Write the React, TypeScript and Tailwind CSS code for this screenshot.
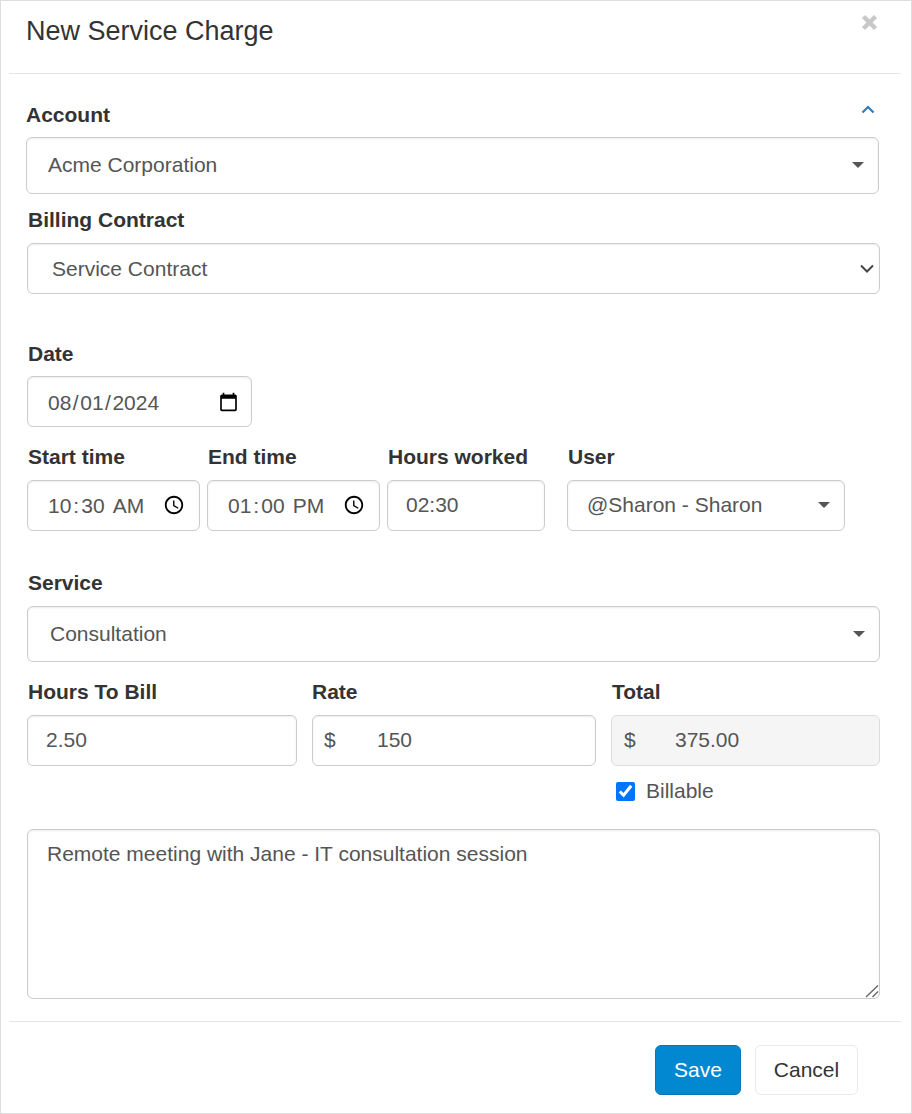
const inputCls =
  "block h-full w-full rounded-[6px] border border-[#ccc] bg-white text-[21px] text-[#555] shadow-[inset_0_1px_2px_rgba(0,0,0,0.075)] outline-none";

function Label({ children, className = "" }: { children: React.ReactNode; className?: string }) {
  return <label className={`block text-[21px] leading-[30px] font-bold text-[#333] ${className}`}>{children}</label>;
}

function Caret() {
  return (
    <svg width="12" height="6" viewBox="0 0 12 6" className="shrink-0">
      <path d="M0 0h12L6 6z" fill="#555" />
    </svg>
  );
}

function FakeSelect({ value, className, pad }: { value: string; className: string; pad: string }) {
  return (
    <div
      className={`flex items-center justify-between rounded-[6px] border border-[#ccc] bg-white text-[21px] text-[#555] shadow-[inset_0_1px_2px_rgba(0,0,0,0.075)] ${pad} ${className}`}
    >
      <span>{value}</span>
      <Caret />
    </div>
  );
}

function MoneyInput({ value, disabled }: { value: string; disabled?: boolean }) {
  return (
    <div
      className={`flex h-[51px] items-center rounded-[6px] border pb-[2px] text-[21px] text-[#555] ${
        disabled
          ? "border-[#ddd] bg-[#f5f5f5]"
          : "border-[#ccc] bg-white shadow-[inset_0_1px_2px_rgba(0,0,0,0.075)]"
      }`}
    >
      <span className={`shrink-0 ${disabled ? "ml-3 w-[51px]" : "ml-[11px] w-[53px]"}`}>$</span>
      <span>{value}</span>
    </div>
  );
}

const dateParts = "[&::-webkit-datetime-edit-text]:px-[0.5px]";
const timeParts = "[&::-webkit-datetime-edit-text]:px-[1px]";

export default function App() {
  return (
    <div className="h-[1114px] w-[912px] border border-[#ddd] bg-white font-['Liberation_Sans',Arial,sans-serif] text-[#333]">
      <header className="relative mr-[10px] ml-2 h-[73px] border-b border-[#e5e5e5] pl-[17px] pt-[11px]">
        <h1 className="text-[27px] leading-[38px] font-normal text-[#333]">New Service Charge</h1>
        <button className="absolute top-[13px] right-[23px]" aria-label="Close">
          <svg width="17" height="17" viewBox="0 0 17 17">
            <path d="M2.5 2.5l12 12M14.5 2.5l-12 12" stroke="#c8c8c8" strokeWidth="4.4" />
          </svg>
        </button>
      </header>

      <main className="pl-[25px]">
        <div className="flex h-[63px] items-end justify-between pr-[36px]">
          <Label className="pb-[7px]">Account</Label>
          <svg width="14" height="9" viewBox="0 0 14 9" className="mb-[23px]">
            <path d="M1.5 7.5L7 2l5.5 5.5" fill="none" stroke="#337ab7" strokeWidth="2.2" />
          </svg>
        </div>
        <FakeSelect value="Acme Corporation" className="h-[57px] w-[853px] pb-[2px]" pad="pl-[21px] pr-[14px]" />

        <div className="pl-px">
          <Label className="mt-[11px] mb-[8px] pl-px">Billing Contract</Label>
          <div className="relative h-[51px] w-[853px]">
            <select defaultValue="Service Contract" className={`${inputCls} appearance-none pl-[24px]`}>
              <option>Service Contract</option>
            </select>
            <svg width="14" height="9" viewBox="0 0 14 9" className="pointer-events-none absolute top-[21px] right-[6px]">
              <path d="M1 1.5l6 6 6-6" fill="none" stroke="#444" strokeWidth="2" />
            </svg>
          </div>

          <Label className="mt-[45px] mb-[7px] pl-px">Date</Label>
          <div className="h-[51px] w-[225px]">
            <input
              type="date"
              defaultValue="2024-08-01"
              className={`${inputCls} ${dateParts} pt-[2px] pl-[19px] pr-[10px]`}
            />
          </div>

          <div className="mt-[15px] flex">
            <div className="mr-[7px] w-[173px]">
              <Label className="mb-[8px] pl-px">Start time</Label>
              <div className="h-[51px]">
                <input type="time" defaultValue="10:30" className={`${inputCls} ${timeParts} pl-[19px] pr-[11px]`} />
              </div>
            </div>
            <div className="mr-[7px] w-[173px]">
              <Label className="mb-[8px] pl-px">End time</Label>
              <div className="h-[51px]">
                <input type="time" defaultValue="13:00" className={`${inputCls} ${timeParts} pl-[19px] pr-[11px]`} />
              </div>
            </div>
            <div className="mr-[22px] w-[158px]">
              <Label className="mb-[8px] pl-px">Hours worked</Label>
              <div className="h-[51px]">
                <input type="text" defaultValue="02:30" className={`${inputCls} pb-[2px] pl-[18px]`} />
              </div>
            </div>
            <div className="w-[278px]">
              <Label className="mb-[8px] pl-px">User</Label>
              <FakeSelect value="@Sharon - Sharon" className="h-[51px] pb-[2px]" pad="pl-[19px] pr-[14px]" />
            </div>
          </div>

          <Label className="mt-[37px] mb-[8px] pl-px">Service</Label>
          <FakeSelect value="Consultation" className="h-[56px] w-[853px]" pad="pl-[22px] pr-[14px]" />

          <div className="mt-[15px] flex">
            <div className="mr-[15px] w-[270px]">
              <Label className="mb-[8px] pl-px">Hours To Bill</Label>
              <div className="h-[51px]">
                <input type="text" defaultValue="2.50" className={`${inputCls} pb-[2px] pl-[18px]`} />
              </div>
            </div>
            <div className="mr-[15px] w-[284px]">
              <Label className="mb-[8px]">Rate</Label>
              <MoneyInput value="150" />
            </div>
            <div className="w-[269px]">
              <Label className="mb-[8px] pl-px">Total</Label>
              <MoneyInput value="375.00" disabled />
              <label className="mt-[15px] flex items-center pl-[5px] text-[21px] leading-[20px] text-[#555]">
                <input type="checkbox" defaultChecked className="mr-[11px] h-[19px] w-[19px] accent-[#0075ff]" />
                Billable
              </label>
            </div>
          </div>

          <div className="relative mt-[28px] h-[170px] w-[853px]">
            <textarea
              defaultValue="Remote meeting with Jane - IT consultation session"
              className={`${inputCls} resize-none px-[19px] py-[9px] leading-[30px]`}
            />
            <svg width="14" height="14" viewBox="0 0 14 14" className="pointer-events-none absolute right-px bottom-px">
              <path d="M1 13L13 1.5M7.5 13L13 7.5" fill="none" stroke="#666" strokeWidth="1.4" />
            </svg>
          </div>
        </div>
      </main>

      <footer className="mr-[10px] ml-2 mt-[22px] flex justify-end border-t border-[#e5e5e5] pt-[23px] pr-[43px]">
        <button className="h-[50px] w-[86px] rounded-[6px] border border-[#0a76b8] bg-[#0288d1] text-[21px] text-white">
          Save
        </button>
        <button className="ml-[14px] h-[50px] w-[103px] rounded-[6px] border border-[#eaeaea] bg-white text-[21px] text-[#333]">
          Cancel
        </button>
      </footer>
    </div>
  );
}
